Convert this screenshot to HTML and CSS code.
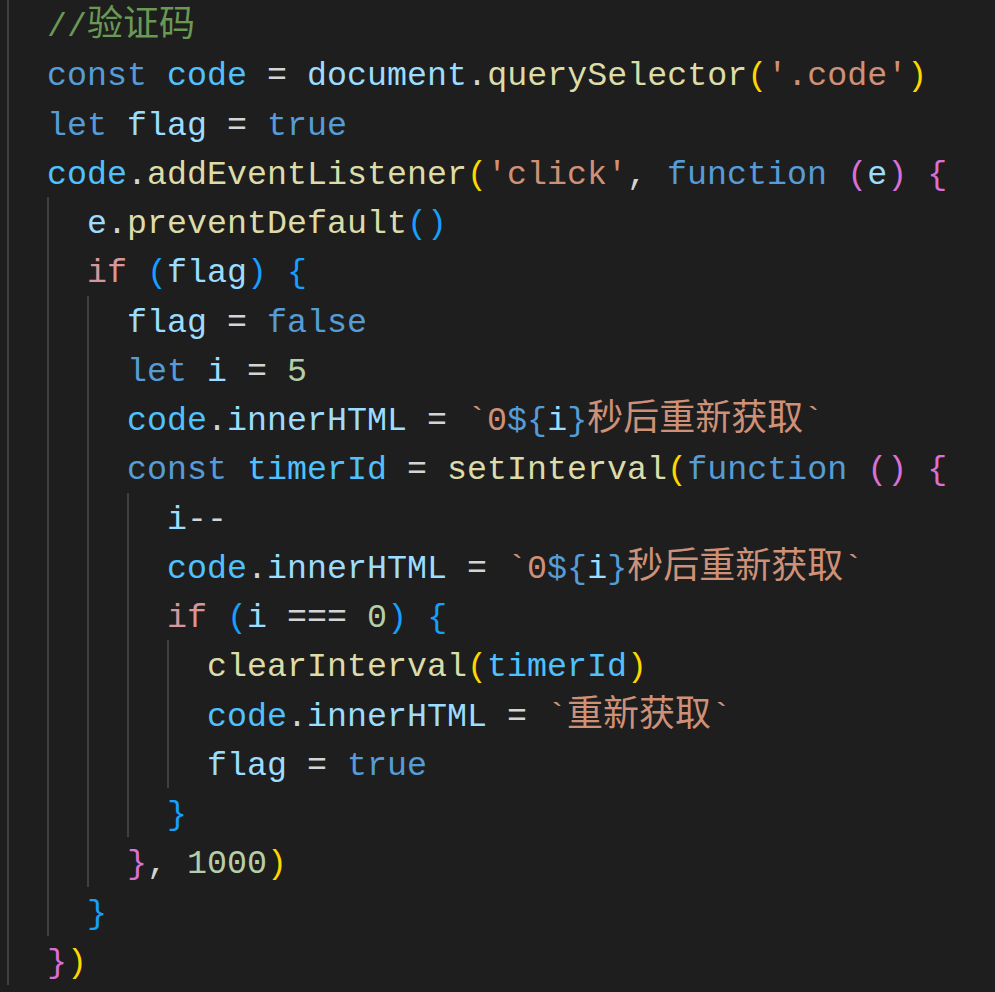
FILE: index.html
```html
<!DOCTYPE html>
<html>
<head>
<meta charset="utf-8">
<link rel="stylesheet" href="styles.css">
</head>
<body>
<div class="editor">
<div class="ln"><span class="ig"></span><span class="cm">//<span class="cjk">验证码</span></span></div>
<div class="ln"><span class="ig"></span><span class="kw">const</span> <span class="cv">code</span> <span class="op">=</span> <span class="vr">document</span><span class="op">.</span><span class="fn">querySelector</span><span class="b1">(</span><span class="st">'.code'</span><span class="b1">)</span></div>
<div class="ln"><span class="ig"></span><span class="kw">let</span> <span class="vr">flag</span> <span class="op">=</span> <span class="kw">true</span></div>
<div class="ln"><span class="ig"></span><span class="cv">code</span><span class="op">.</span><span class="fn">addEventListener</span><span class="b1">(</span><span class="st">'click'</span><span class="op">,</span> <span class="kw">function</span> <span class="b2">(</span><span class="vr">e</span><span class="b2">)</span> <span class="b2">{</span></div>
<div class="ln"><span class="ig"></span><span class="ig"></span><span class="vr">e</span><span class="op">.</span><span class="fn">preventDefault</span><span class="b3">()</span></div>
<div class="ln"><span class="ig"></span><span class="ig"></span><span class="ct">if</span> <span class="b3">(</span><span class="vr">flag</span><span class="b3">)</span> <span class="b3">{</span></div>
<div class="ln"><span class="ig"></span><span class="ig"></span><span class="ig"></span><span class="vr">flag</span> <span class="op">=</span> <span class="kw">false</span></div>
<div class="ln"><span class="ig"></span><span class="ig"></span><span class="ig"></span><span class="kw">let</span> <span class="vr">i</span> <span class="op">=</span> <span class="nm">5</span></div>
<div class="ln"><span class="ig"></span><span class="ig"></span><span class="ig"></span><span class="cv">code</span><span class="op">.</span><span class="vr">innerHTML</span> <span class="op">=</span> <span class="st">`0</span><span class="kw">${</span><span class="vr">i</span><span class="kw">}</span><span class="st"><span class="cjk">秒后重新获取</span>`</span></div>
<div class="ln"><span class="ig"></span><span class="ig"></span><span class="ig"></span><span class="kw">const</span> <span class="cv">timerId</span> <span class="op">=</span> <span class="fn">setInterval</span><span class="b1">(</span><span class="kw">function</span> <span class="b2">()</span> <span class="b2">{</span></div>
<div class="ln"><span class="ig"></span><span class="ig"></span><span class="ig"></span><span class="ig"></span><span class="vr">i</span><span class="op">--</span></div>
<div class="ln"><span class="ig"></span><span class="ig"></span><span class="ig"></span><span class="ig"></span><span class="cv">code</span><span class="op">.</span><span class="vr">innerHTML</span> <span class="op">=</span> <span class="st">`0</span><span class="kw">${</span><span class="vr">i</span><span class="kw">}</span><span class="st"><span class="cjk">秒后重新获取</span>`</span></div>
<div class="ln"><span class="ig"></span><span class="ig"></span><span class="ig"></span><span class="ig"></span><span class="ct">if</span> <span class="b3">(</span><span class="vr">i</span> <span class="op">===</span> <span class="nm">0</span><span class="b3">)</span> <span class="b3">{</span></div>
<div class="ln"><span class="ig"></span><span class="ig"></span><span class="ig"></span><span class="ig"></span><span class="ig"></span><span class="fn">clearInterval</span><span class="b1">(</span><span class="cv">timerId</span><span class="b1">)</span></div>
<div class="ln"><span class="ig"></span><span class="ig"></span><span class="ig"></span><span class="ig"></span><span class="ig"></span><span class="cv">code</span><span class="op">.</span><span class="vr">innerHTML</span> <span class="op">=</span> <span class="st">`<span class="cjk">重新获取</span>`</span></div>
<div class="ln"><span class="ig"></span><span class="ig"></span><span class="ig"></span><span class="ig"></span><span class="ig"></span><span class="vr">flag</span> <span class="op">=</span> <span class="kw">true</span></div>
<div class="ln"><span class="ig"></span><span class="ig"></span><span class="ig"></span><span class="ig"></span><span class="b3">}</span></div>
<div class="ln"><span class="ig"></span><span class="ig"></span><span class="ig"></span><span class="b2">}</span><span class="op">,</span> <span class="nm">1000</span><span class="b1">)</span></div>
<div class="ln"><span class="ig"></span><span class="ig"></span><span class="b3">}</span></div>
<div class="ln"><span class="ig"></span><span class="b2">}</span><span class="b1">)</span></div>
</div>
</body>
</html>
```
FILE: styles.css
```css
html, body {
  margin: 0;
  padding: 0;
  background: #1e1e1e;
}
body {
  width: 995px;
  height: 992px;
  overflow: hidden;
}
.editor {
  padding-left: 7px;
  font-family: "Liberation Mono", "Noto Sans CJK SC", monospace;
  font-size: 33.33px;
  color: #d4d4d4;
}
.ln {
  display: block;
  height: 49.25px;
  line-height: 55px;
  white-space: pre;
}
.ig {
  display: inline-block;
  vertical-align: top;
  width: 40px;
  height: 49.25px;
  box-sizing: border-box;
  border-left: 2px solid #404040;
}
.cjk {
  font-family: "Noto Sans CJK SC", sans-serif;
  font-size: 36px;
  line-height: 20px;
}
.cm { color: #6a9955; }
.kw { color: #569cd6; }
.ct { color: #d6969b; }
.cv { color: #4fc1ff; }
.vr { color: #9cdcfe; }
.fn { color: #dcdcaa; }
.st { color: #ce9178; }
.nm { color: #b5cea8; }
.op { color: #d4d4d4; }
.b1 { color: #ffd700; }
.b2 { color: #da70d6; }
.b3 { color: #179fff; }
```
